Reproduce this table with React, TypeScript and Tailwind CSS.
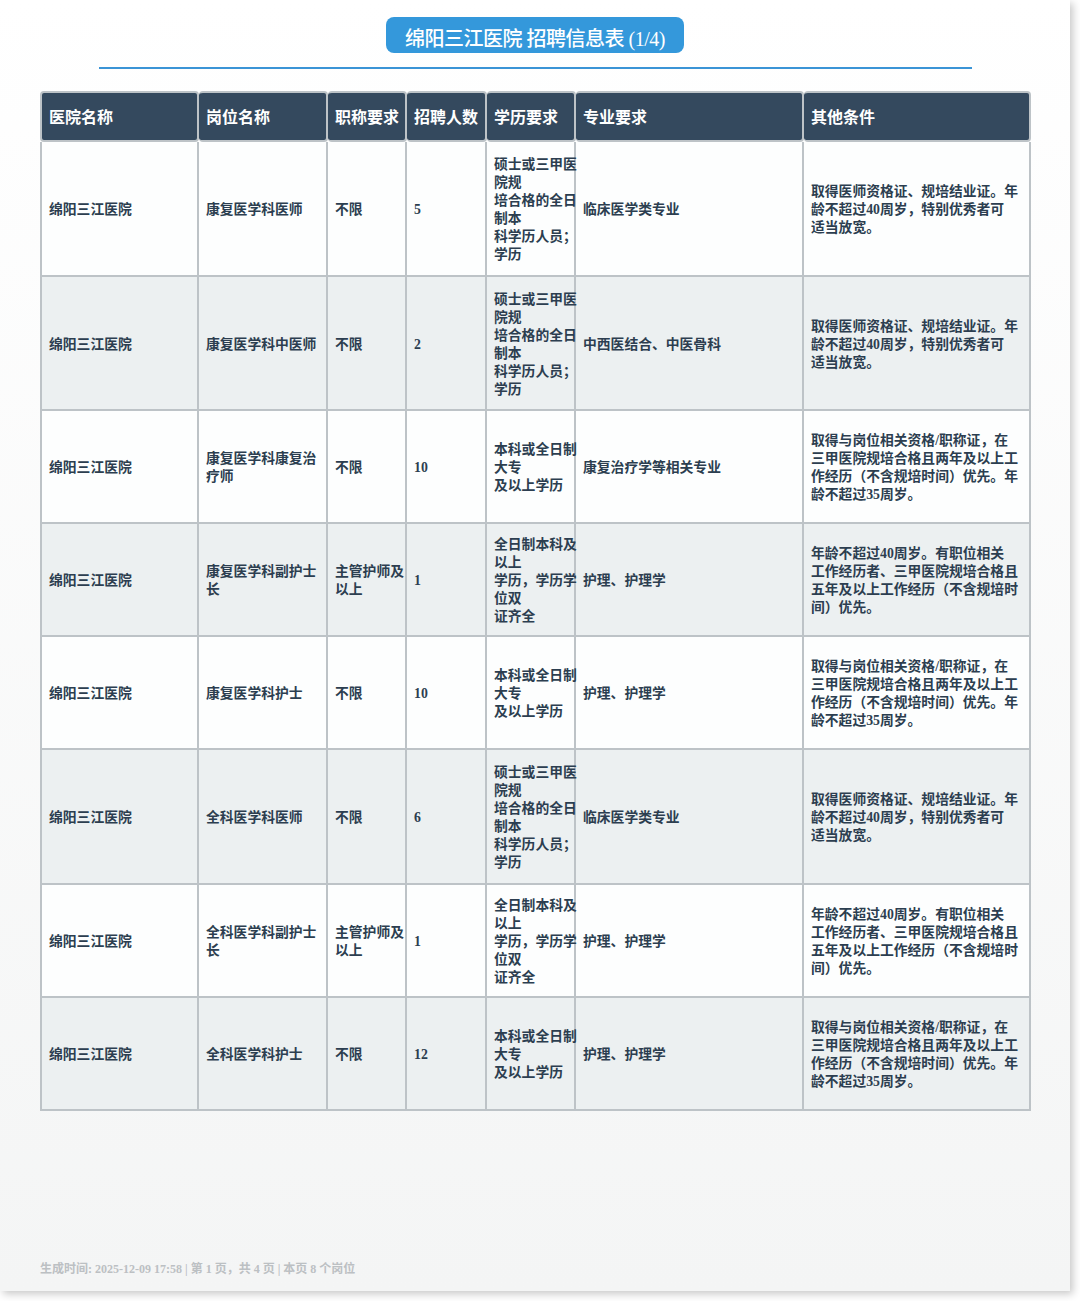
import React from 'react';

type Row = {
  post: string[];
  title: string[];
  count: string;
  edu: string[];
  major: string;
  other: string[];
  h: string;
};

const EDU_MASTER = ['硕士或三甲医', '院规', '培合格的全日', '制本', '科学历人员；', '学历'];
const EDU_COLLEGE = ['本科或全日制', '大专', '及以上学历'];
const EDU_NURSE = ['全日制本科及', '以上', '学历，学历学', '位双', '证齐全'];

const OTHER_DOCTOR = ['取得医师资格证、规培结业证。年', '龄不超过40周岁，特别优秀者可', '适当放宽。'];
const OTHER_GENERAL = [
  '取得与岗位相关资格/职称证，在',
  '三甲医院规培合格且两年及以上工',
  '作经历（不含规培时间）优先。年',
  '龄不超过35周岁。',
];
const OTHER_HEAD = [
  '年龄不超过40周岁。有职位相关',
  '工作经历者、三甲医院规培合格且',
  '五年及以上工作经历（不含规培时',
  '间）优先。',
];

const rows: Row[] = [
  { post: ['康复医学科医师'], title: ['不限'], count: '5', edu: EDU_MASTER, major: '临床医学类专业', other: OTHER_DOCTOR, h: 'h-[135px]' },
  { post: ['康复医学科中医师'], title: ['不限'], count: '2', edu: EDU_MASTER, major: '中西医结合、中医骨科', other: OTHER_DOCTOR, h: 'h-[134px]' },
  { post: ['康复医学科康复治', '疗师'], title: ['不限'], count: '10', edu: EDU_COLLEGE, major: '康复治疗学等相关专业', other: OTHER_GENERAL, h: 'h-[113px]' },
  { post: ['康复医学科副护士', '长'], title: ['主管护师及', '以上'], count: '1', edu: EDU_NURSE, major: '护理、护理学', other: OTHER_HEAD, h: 'h-[113px]' },
  { post: ['康复医学科护士'], title: ['不限'], count: '10', edu: EDU_COLLEGE, major: '护理、护理学', other: OTHER_GENERAL, h: 'h-[113px]' },
  { post: ['全科医学科医师'], title: ['不限'], count: '6', edu: EDU_MASTER, major: '临床医学类专业', other: OTHER_DOCTOR, h: 'h-[135px]' },
  { post: ['全科医学科副护士', '长'], title: ['主管护师及', '以上'], count: '1', edu: EDU_NURSE, major: '护理、护理学', other: OTHER_HEAD, h: 'h-[113px]' },
  { post: ['全科医学科护士'], title: ['不限'], count: '12', edu: EDU_COLLEGE, major: '护理、护理学', other: OTHER_GENERAL, h: 'h-[113px]' },
];

const headers = ['医院名称', '岗位名称', '职称要求', '招聘人数', '学历要求', '专业要求', '其他条件'];
const widths = ['w-[159px]', 'w-[129px]', 'w-[79px]', 'w-[80px]', 'w-[89px]', 'w-[228px]', 'w-[227px]'];

const Lines = ({ lines }: { lines: string[] }) => (
  <>
    {lines.map((l, i) => (
      <div key={i} className="whitespace-nowrap">
        {l}
      </div>
    ))}
  </>
);

const cell = 'border-r-2 border-b-2 border-[#bdc3c7] px-[7px] pt-[3px] align-middle text-left overflow-visible';

export default function App() {
  return (
    <div
      className="w-[1080px] h-[1301px] bg-white"
      style={{ fontFamily: '"Liberation Serif", "Noto Sans CJK SC", serif' }}
    >
      <div className="relative w-[1070px] h-[1291px] bg-gradient-to-b from-white to-[#f4f5f5] shadow-[3px_3px_8px_rgba(0,0,0,0.22)] flex flex-col">
        <div className="flex justify-center pt-[17px]">
          <div className="w-[298px] h-[36px] rounded-lg bg-[#3498db] flex items-center justify-center pt-[7px] text-white text-[20px] font-medium tracking-[-0.5px]">
            绵阳三江医院 招聘信息表 (1/4)
          </div>
        </div>
        <div className="mx-auto mt-[14px] w-[873px] h-[2px] bg-[#3a94d6]" />

        <div className="pl-[40px] mt-[22px]">
          <table className="table-fixed w-[991px] border-separate border-spacing-0 text-[13.8px] leading-[18px] text-[#2c3e50] font-semibold">
            <colgroup>
              {widths.map((w, i) => (
                <col key={i} className={w} />
              ))}
            </colgroup>
            <thead>
              <tr className="h-[51px]">
                {headers.map((h, i) => (
                  <th
                    key={h}
                    className={`bg-[#34495e] text-white text-[16px] font-bold text-left px-[7px] pt-[2px] whitespace-nowrap border-2 border-[#bdc3c7] rounded-[4px] ${i > 0 ? 'border-l-0' : ''}`}
                  >
                    {h}
                  </th>
                ))}
              </tr>
            </thead>
            <tbody>
              {rows.map((r, i) => (
                <tr key={i} className={`${r.h} ${i % 2 === 1 ? 'bg-[#ecf0f1]' : 'bg-[#fdfefe]'}`}>
                  <td className={`${cell} border-l-2`}>绵阳三江医院</td>
                  <td className={cell}>
                    <Lines lines={r.post} />
                  </td>
                  <td className={cell}>
                    <Lines lines={r.title} />
                  </td>
                  <td className={cell}>{r.count}</td>
                  <td className={cell}>
                    <Lines lines={r.edu} />
                  </td>
                  <td className={cell}>{r.major}</td>
                  <td className={cell}>
                    <Lines lines={r.other} />
                  </td>
                </tr>
              ))}
            </tbody>
          </table>
        </div>

        <div className="mt-auto mb-[13px] pl-[40px] text-[12px] font-semibold text-[#bcc0c3]">
          生成时间: 2025-12-09 17:58 | 第 1 页，共 4 页 | 本页 8 个岗位
        </div>
      </div>
    </div>
  );
}
